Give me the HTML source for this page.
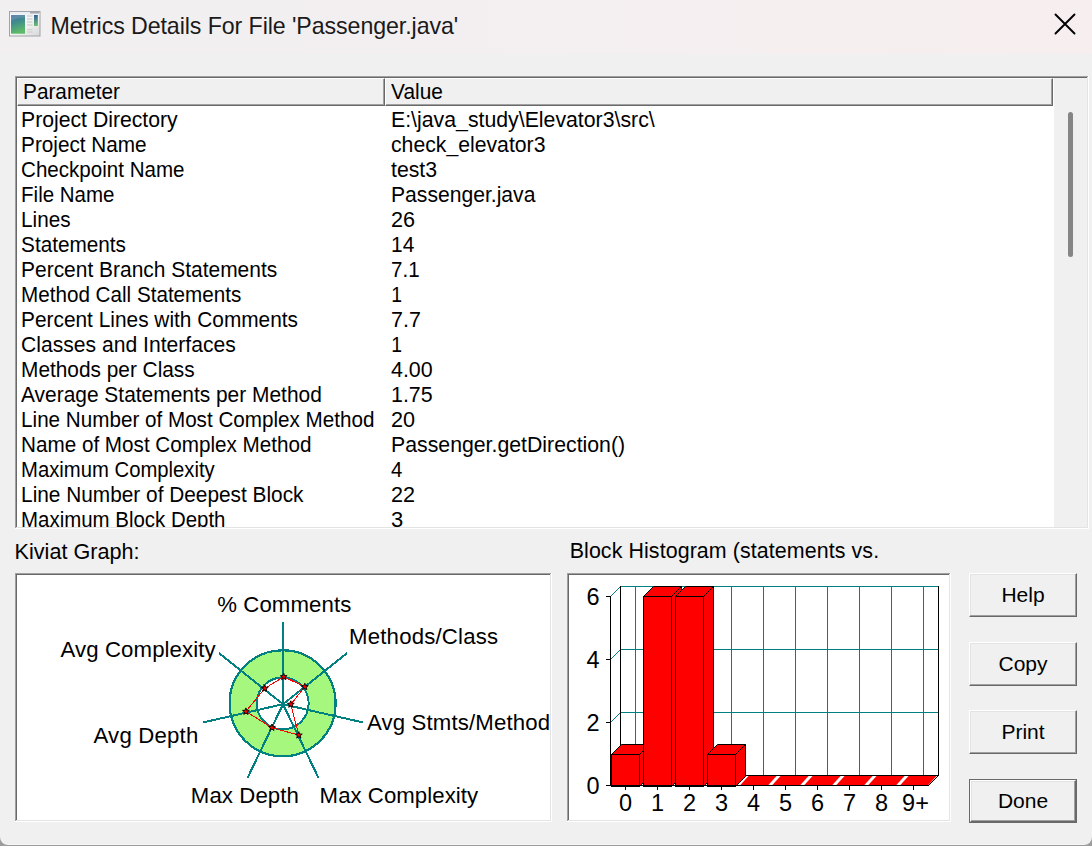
<!DOCTYPE html>
<html><head><meta charset="utf-8">
<style>
html,body{margin:0;padding:0;}
body{width:1092px;height:846px;overflow:hidden;background:#9c9c9c;position:relative;font-family:"Liberation Sans",sans-serif;color:#000;}
.a{position:absolute;white-space:nowrap;}
#title{left:0;top:0;width:1092px;height:54px;background:linear-gradient(90deg,#f1eff0 0%,#f3eff0 40%,#f6eeef 100%);}
#ttl{left:50.5px;top:8.6px;font-size:23.2px;line-height:34px;letter-spacing:-0.08px;color:#1a1a1a;}
.lb{font-size:21.5px;line-height:25px;}
.hcell{box-sizing:border-box;background:#f0f0f0;border-top:1px solid #fff;border-left:1px solid #fff;border-right:1px solid #696969;border-bottom:1px solid #696969;box-shadow:inset -1px -1px 0 #a0a0a0;}
.btn{box-sizing:border-box;width:108px;height:44px;background:#f0f0f0;border-top:1px solid #fff;border-left:1px solid #fff;border-right:1px solid #696969;border-bottom:1px solid #696969;box-shadow:inset -1px -1px 0 #a0a0a0, inset 1px 1px 0 #e3e3e3;font-size:21px;text-align:center;line-height:42px;}
</style></head><body>
<div class="a" style="left:0;top:0;width:1092px;height:845px;background:#f0f0f0;border-radius:0 0 8px 8px;"></div>
<div class="a" style="left:8px;top:844px;width:1076px;height:1px;background:#f6f6f6;"></div>
<div id="title" class="a"></div>
<svg class="a" style="left:9px;top:11px" width="32" height="26" viewBox="0 0 32 26">
  <defs>
    <linearGradient id="ig" x1="0" y1="0" x2="0.25" y2="1"><stop offset="0" stop-color="#4a70aa"/><stop offset="0.45" stop-color="#3f8d8c"/><stop offset="1" stop-color="#5dba69"/></linearGradient>
    <linearGradient id="ig2" x1="0" y1="0" x2="0" y2="1"><stop offset="0" stop-color="#2f5f9a"/><stop offset="1" stop-color="#6cc070"/></linearGradient>
    <linearGradient id="ibg" x1="0" y1="0" x2="1" y2="1"><stop offset="0" stop-color="#fdfdfd"/><stop offset="0.6" stop-color="#f2f2f2"/><stop offset="1" stop-color="#d6d6d6"/></linearGradient>
  </defs>
  <rect x="0.5" y="0.5" width="30.5" height="24.5" fill="url(#ibg)" stroke="#a0a4aa"/>
  <rect x="1" y="1" width="29.5" height="2.5" fill="#eaedf1"/>
  <rect x="21" y="1" width="9.5" height="1.5" fill="#a4a8ae"/>
  <rect x="2" y="4" width="14" height="18.7" fill="url(#ig)"/>
  <path d="M2 10 Q6 6.5 16 6.5 L16 4 L2 4 Z" fill="#ffffff" opacity="0.12"/>
  <g stroke="#d2d2d2" stroke-width="1.4"><line x1="18" y1="5" x2="23.5" y2="5"/><line x1="18" y1="8" x2="23.5" y2="8"/><line x1="18" y1="11" x2="23.5" y2="11"/><line x1="18" y1="14" x2="23.5" y2="14"/><line x1="18" y1="18.5" x2="23.5" y2="18.5"/><line x1="18" y1="21" x2="23.5" y2="21"/></g>
  <rect x="25" y="4" width="3.8" height="11" fill="url(#ig2)"/>
</svg>
<div id="ttl" class="a">Metrics Details For File 'Passenger.java'</div>
<svg class="a" style="left:1050px;top:9px" width="30" height="30" viewBox="0 0 30 30"><path d="M5.5 5.5 L24.5 24.5 M24.5 5.5 L5.5 24.5" stroke="#000" stroke-width="1.9" stroke-linecap="round"/></svg>
<div class="a" style="left:15px;top:76px;width:1074px;height:1px;background:#a0a0a0"></div>
<div class="a" style="left:15px;top:76px;width:1px;height:453px;background:#a0a0a0"></div>
<div class="a" style="left:16px;top:77px;width:1072px;height:1px;background:#696969"></div>
<div class="a" style="left:16px;top:77px;width:1px;height:451px;background:#696969"></div>
<div class="a" style="left:15px;top:528px;width:1074px;height:1px;background:#fff"></div>
<div class="a" style="left:1088px;top:76px;width:1px;height:453px;background:#fff"></div>
<div class="a" style="left:16px;top:527px;width:1072px;height:1px;background:#e3e3e3"></div>
<div class="a" style="left:1087px;top:77px;width:1px;height:451px;background:#e3e3e3"></div>
<div class="a" style="left:17px;top:78px;width:1070px;height:449px;background:#fff"></div>
<div class="a" style="left:17px;top:78px;width:1037px;height:449px;overflow:hidden">
<div class="a hcell" style="left:0;top:0;width:368px;height:28px;"></div>
<div class="a hcell" style="left:368px;top:0;width:668px;height:28px;"></div>
<div class="a lb" style="left:5.5px;top:2px;transform:scaleX(0.965);transform-origin:1.5px 0">Parameter</div>
<div class="a lb" style="left:373.5px;top:2px;transform:scaleX(0.97);transform-origin:1.5px 0">Value</div>
<div class="a lb" style="left:4px;top:30px;transform:scaleX(0.9859);transform-origin:1.5px 0">Project Directory</div><div class="a lb" style="left:374px;top:30px;transform:scaleX(0.9894);transform-origin:1.5px 0">E:\java_study\Elevator3\src\</div>
<div class="a lb" style="left:4px;top:55px;transform:scaleX(0.9644);transform-origin:1.5px 0">Project Name</div><div class="a lb" style="left:374px;top:55px;transform:scaleX(0.9864);transform-origin:1.5px 0">check_elevator3</div>
<div class="a lb" style="left:4px;top:80px;transform:scaleX(0.9564);transform-origin:1.5px 0">Checkpoint Name</div><div class="a lb" style="left:374px;top:80px;transform:scaleX(0.9886);transform-origin:1.5px 0">test3</div>
<div class="a lb" style="left:4px;top:105px;transform:scaleX(0.9534);transform-origin:1.5px 0">File Name</div><div class="a lb" style="left:374px;top:105px;transform:scaleX(0.9821);transform-origin:1.5px 0">Passenger.java</div>
<div class="a lb" style="left:4px;top:130px;transform:scaleX(0.9629);transform-origin:1.5px 0">Lines</div><div class="a lb" style="left:374px;top:130px;transform:scaleX(1.0048);transform-origin:1.5px 0">26</div>
<div class="a lb" style="left:4px;top:155px;transform:scaleX(0.9649);transform-origin:1.5px 0">Statements</div><div class="a lb" style="left:374px;top:155px;transform:scaleX(0.9714);transform-origin:1.5px 0">14</div>
<div class="a lb" style="left:4px;top:180px;transform:scaleX(0.9742);transform-origin:1.5px 0">Percent Branch Statements</div><div class="a lb" style="left:374px;top:180px;transform:scaleX(0.9556);transform-origin:1.5px 0">7.1</div>
<div class="a lb" style="left:4px;top:205px;transform:scaleX(0.9598);transform-origin:1.5px 0">Method Call Statements</div><div class="a lb" style="left:374px;top:205px;transform:scaleX(0.9000);transform-origin:1.5px 0">1</div>
<div class="a lb" style="left:4px;top:230px;transform:scaleX(0.9699);transform-origin:1.5px 0">Percent Lines with Comments</div><div class="a lb" style="left:374px;top:230px;transform:scaleX(1.0000);transform-origin:1.5px 0">7.7</div>
<div class="a lb" style="left:4px;top:255px;transform:scaleX(0.9819);transform-origin:1.5px 0">Classes and Interfaces</div><div class="a lb" style="left:374px;top:255px;transform:scaleX(0.9000);transform-origin:1.5px 0">1</div>
<div class="a lb" style="left:4px;top:280px;transform:scaleX(0.9688);transform-origin:1.5px 0">Methods per Class</div><div class="a lb" style="left:374px;top:280px;transform:scaleX(0.9949);transform-origin:1.5px 0">4.00</div>
<div class="a lb" style="left:4px;top:305px;transform:scaleX(0.9728);transform-origin:1.5px 0">Average Statements per Method</div><div class="a lb" style="left:374px;top:305px;transform:scaleX(0.9949);transform-origin:1.5px 0">1.75</div>
<div class="a lb" style="left:4px;top:330px;transform:scaleX(0.9602);transform-origin:1.5px 0">Line Number of Most Complex Method</div><div class="a lb" style="left:374px;top:330px;transform:scaleX(1.0048);transform-origin:1.5px 0">20</div>
<div class="a lb" style="left:4px;top:355px;transform:scaleX(0.9608);transform-origin:1.5px 0">Name of Most Complex Method</div><div class="a lb" style="left:374px;top:355px;transform:scaleX(0.9893);transform-origin:1.5px 0">Passenger.getDirection()</div>
<div class="a lb" style="left:4px;top:380px;transform:scaleX(0.9422);transform-origin:1.5px 0">Maximum Complexity</div><div class="a lb" style="left:374px;top:380px;transform:scaleX(0.9444);transform-origin:1.5px 0">4</div>
<div class="a lb" style="left:4px;top:405px;transform:scaleX(0.9685);transform-origin:1.5px 0">Line Number of Deepest Block</div><div class="a lb" style="left:374px;top:405px;transform:scaleX(1.0048);transform-origin:1.5px 0">22</div>
<div class="a lb" style="left:4px;top:430px;transform:scaleX(0.9504);transform-origin:1.5px 0">Maximum Block Depth</div><div class="a lb" style="left:374px;top:430px;transform:scaleX(1.0222);transform-origin:1.5px 0">3</div>
<div class="a lb" style="left:4px;top:455px;transform:scaleX(1.0000);transform-origin:1.5px 0">Average Block Depth</div><div class="a lb" style="left:374px;top:455px;transform:scaleX(1.0000);transform-origin:1.5px 0">1.50</div>
</div>
<div class="a" style="left:1054px;top:78px;width:33px;height:449px;background:#f0f0f0"></div>
<div class="a" style="left:1068px;top:112px;width:5px;height:145px;border-radius:2.5px;background:#858585"></div>
<div class="a" style="left:14.6px;top:539px;font-size:21.6px;">Kiviat Graph:</div>
<div class="a" style="left:569.7px;top:539px;font-size:21.4px;letter-spacing:0.09px">Block Histogram (statements vs.</div>
<div class="a" style="left:15px;top:573px;width:537px;height:1px;background:#a0a0a0"></div>
<div class="a" style="left:15px;top:573px;width:1px;height:249px;background:#a0a0a0"></div>
<div class="a" style="left:16px;top:574px;width:535px;height:1px;background:#696969"></div>
<div class="a" style="left:16px;top:574px;width:1px;height:247px;background:#696969"></div>
<div class="a" style="left:15px;top:821px;width:537px;height:1px;background:#fff"></div>
<div class="a" style="left:551px;top:573px;width:1px;height:249px;background:#fff"></div>
<div class="a" style="left:16px;top:820px;width:535px;height:1px;background:#e3e3e3"></div>
<div class="a" style="left:550px;top:574px;width:1px;height:247px;background:#e3e3e3"></div>
<div class="a" style="left:17px;top:575px;width:533px;height:245px;background:#fff"></div>
<div class="a" style="left:567px;top:573px;width:384px;height:1px;background:#a0a0a0"></div>
<div class="a" style="left:567px;top:573px;width:1px;height:249px;background:#a0a0a0"></div>
<div class="a" style="left:568px;top:574px;width:382px;height:1px;background:#696969"></div>
<div class="a" style="left:568px;top:574px;width:1px;height:247px;background:#696969"></div>
<div class="a" style="left:567px;top:821px;width:384px;height:1px;background:#fff"></div>
<div class="a" style="left:950px;top:573px;width:1px;height:249px;background:#fff"></div>
<div class="a" style="left:568px;top:820px;width:382px;height:1px;background:#e3e3e3"></div>
<div class="a" style="left:949px;top:574px;width:1px;height:247px;background:#e3e3e3"></div>
<div class="a" style="left:569px;top:575px;width:380px;height:245px;background:#fff"></div>
<svg class="a" style="left:0;top:0" width="1092" height="846" viewBox="0 0 1092 846">
<defs><clipPath id="kc"><rect x="17" y="575" width="533" height="245"/></clipPath><clipPath id="hc"><rect x="569" y="575" width="380" height="245"/></clipPath></defs>
<g clip-path="url(#kc)">
<g shape-rendering="crispEdges"><circle cx="282.6" cy="703.3000000000001" r="53" fill="#a6f77e" stroke="#008080" stroke-width="2.2"/>
<circle cx="282.7" cy="703.4000000000001" r="26" fill="#fff" stroke="#008080" stroke-width="2"/>
<line x1="283" y1="704.2" x2="283.00" y2="622.20" stroke="#008080" stroke-width="2"/>
<line x1="283" y1="704.2" x2="347.11" y2="653.07" stroke="#008080" stroke-width="2"/>
<line x1="283" y1="704.2" x2="362.94" y2="722.45" stroke="#008080" stroke-width="2"/>
<line x1="283" y1="704.2" x2="318.58" y2="778.08" stroke="#008080" stroke-width="2"/>
<line x1="283" y1="704.2" x2="247.42" y2="778.08" stroke="#008080" stroke-width="2"/>
<line x1="283" y1="704.2" x2="203.06" y2="722.45" stroke="#008080" stroke-width="2"/>
<line x1="283" y1="704.2" x2="218.89" y2="653.07" stroke="#008080" stroke-width="2"/>
</g>
<polygon points="283.7,676.8 304.8,686.8 290.8,704.4 298.8,735.2 271.9,727.6 245.9,711.5 264.8,688.4" fill="none" stroke="#ff0000" stroke-width="1" shape-rendering="crispEdges"/>
<polygon points="283.70,673.20 282.82,675.59 280.28,675.69 282.27,677.26 281.58,679.71 283.70,678.30 285.82,679.71 285.13,677.26 287.12,675.69 284.58,675.59" fill="#ff0000" stroke="#000" stroke-width="0.9"/>
<polygon points="304.80,683.20 303.92,685.59 301.38,685.69 303.37,687.26 302.68,689.71 304.80,688.30 306.92,689.71 306.23,687.26 308.22,685.69 305.68,685.59" fill="#ff0000" stroke="#000" stroke-width="0.9"/>
<polygon points="290.80,700.80 289.92,703.19 287.38,703.29 289.37,704.86 288.68,707.31 290.80,705.90 292.92,707.31 292.23,704.86 294.22,703.29 291.68,703.19" fill="#ff0000" stroke="#000" stroke-width="0.9"/>
<polygon points="298.80,731.60 297.92,733.99 295.38,734.09 297.37,735.66 296.68,738.11 298.80,736.70 300.92,738.11 300.23,735.66 302.22,734.09 299.68,733.99" fill="#ff0000" stroke="#000" stroke-width="0.9"/>
<polygon points="271.90,724.00 271.02,726.39 268.48,726.49 270.47,728.06 269.78,730.51 271.90,729.10 274.02,730.51 273.33,728.06 275.32,726.49 272.78,726.39" fill="#ff0000" stroke="#000" stroke-width="0.9"/>
<polygon points="245.90,707.90 245.02,710.29 242.48,710.39 244.47,711.96 243.78,714.41 245.90,713.00 248.02,714.41 247.33,711.96 249.32,710.39 246.78,710.29" fill="#ff0000" stroke="#000" stroke-width="0.9"/>
<polygon points="264.80,684.80 263.92,687.19 261.38,687.29 263.37,688.86 262.68,691.31 264.80,689.90 266.92,691.31 266.23,688.86 268.22,687.29 265.68,687.19" fill="#ff0000" stroke="#000" stroke-width="0.9"/>
<text x="217.2" y="612" font-family="Liberation Sans" font-size="22.2" letter-spacing="0.1">% Comments</text>
<text x="349" y="643.6" font-family="Liberation Sans" font-size="22.2" letter-spacing="0.2">Methods/Class</text>
<text x="60.6" y="657" font-family="Liberation Sans" font-size="22.2" letter-spacing="0.1">Avg Complexity</text>
<text x="367" y="730.2" font-family="Liberation Sans" font-size="22.2" letter-spacing="0.15">Avg Stmts/Method</text>
<text x="93.5" y="743" font-family="Liberation Sans" font-size="22.2" letter-spacing="0.2">Avg Depth</text>
<text x="190.8" y="802.6" font-family="Liberation Sans" font-size="22.2" letter-spacing="0.1">Max Depth</text>
<text x="319.6" y="802.6" font-family="Liberation Sans" font-size="22.2" letter-spacing="0.05">Max Complexity</text>
</g>
<g clip-path="url(#hc)">
<line x1="620" y1="586.5" x2="939" y2="586.5" stroke="#008080" stroke-width="1"/>
<line x1="620" y1="649.5" x2="939" y2="649.5" stroke="#008080" stroke-width="1"/>
<line x1="620" y1="712.5" x2="939" y2="712.5" stroke="#008080" stroke-width="1"/>
<line x1="635.5" y1="586" x2="635.5" y2="776" stroke="#008080" stroke-width="1"/>
<line x1="667.5" y1="586" x2="667.5" y2="776" stroke="#008080" stroke-width="1"/>
<line x1="699.5" y1="586" x2="699.5" y2="776" stroke="#008080" stroke-width="1"/>
<line x1="731.5" y1="586" x2="731.5" y2="776" stroke="#008080" stroke-width="1"/>
<line x1="763.5" y1="586" x2="763.5" y2="776" stroke="#008080" stroke-width="1"/>
<line x1="795.5" y1="586" x2="795.5" y2="776" stroke="#008080" stroke-width="1"/>
<line x1="827.5" y1="586" x2="827.5" y2="776" stroke="#008080" stroke-width="1"/>
<line x1="859.5" y1="586" x2="859.5" y2="776" stroke="#008080" stroke-width="1"/>
<line x1="891.5" y1="586" x2="891.5" y2="776" stroke="#008080" stroke-width="1"/>
<line x1="923.5" y1="586" x2="923.5" y2="776" stroke="#008080" stroke-width="1"/>
<line x1="610.5" y1="596.5" x2="620.5" y2="586.5" stroke="#008080" stroke-width="1"/>
<line x1="610.5" y1="659.5" x2="620.5" y2="649.5" stroke="#008080" stroke-width="1"/>
<line x1="610.5" y1="722.5" x2="620.5" y2="712.5" stroke="#008080" stroke-width="1"/>
<line x1="610.5" y1="785.5" x2="620.5" y2="775.5" stroke="#008080" stroke-width="1"/>
<line x1="620.5" y1="586" x2="620.5" y2="776" stroke="#000" stroke-width="1"/>
<line x1="938.5" y1="586" x2="938.5" y2="776" stroke="#000" stroke-width="1"/>
<line x1="610.5" y1="596" x2="610.5" y2="786" stroke="#000" stroke-width="1"/>
<line x1="606" y1="596.5" x2="611" y2="596.5" stroke="#000" stroke-width="1"/>
<line x1="606" y1="659.5" x2="611" y2="659.5" stroke="#000" stroke-width="1"/>
<line x1="606" y1="722.5" x2="611" y2="722.5" stroke="#000" stroke-width="1"/>
<line x1="606" y1="785.5" x2="611" y2="785.5" stroke="#000" stroke-width="1"/>
<line x1="625.5" y1="786" x2="625.5" y2="790" stroke="#000" stroke-width="1"/>
<line x1="657.5" y1="786" x2="657.5" y2="790" stroke="#000" stroke-width="1"/>
<line x1="689.5" y1="786" x2="689.5" y2="790" stroke="#000" stroke-width="1"/>
<line x1="721.5" y1="786" x2="721.5" y2="790" stroke="#000" stroke-width="1"/>
<line x1="753.5" y1="786" x2="753.5" y2="790" stroke="#000" stroke-width="1"/>
<line x1="785.5" y1="786" x2="785.5" y2="790" stroke="#000" stroke-width="1"/>
<line x1="817.5" y1="786" x2="817.5" y2="790" stroke="#000" stroke-width="1"/>
<line x1="849.5" y1="786" x2="849.5" y2="790" stroke="#000" stroke-width="1"/>
<line x1="881.5" y1="786" x2="881.5" y2="790" stroke="#000" stroke-width="1"/>
<line x1="913.5" y1="786" x2="913.5" y2="790" stroke="#000" stroke-width="1"/>
<polygon points="639.5,754.5 649.5,744.5 649.5,776.5 639.5,786.5" fill="#ff0000" stroke="#000" stroke-width="1"/>
<polygon points="611.5,754.5 639.5,754.5 649.5,744.5 621.5,744.5" fill="#ff0000" stroke="#000" stroke-width="1"/>
<rect x="611.5" y="754.5" width="28" height="32.0" fill="#ff0000" stroke="#000" stroke-width="1"/>
<polygon points="671.5,596.5 681.5,586.5 681.5,776.5 671.5,786.5" fill="#ff0000" stroke="#000" stroke-width="1"/>
<polygon points="643.5,596.5 671.5,596.5 681.5,586.5 653.5,586.5" fill="#ff0000" stroke="#000" stroke-width="1"/>
<rect x="643.5" y="596.5" width="28" height="190.0" fill="#ff0000" stroke="#000" stroke-width="1"/>
<polygon points="703.5,596.5 713.5,586.5 713.5,776.5 703.5,786.5" fill="#ff0000" stroke="#000" stroke-width="1"/>
<polygon points="675.5,596.5 703.5,596.5 713.5,586.5 685.5,586.5" fill="#ff0000" stroke="#000" stroke-width="1"/>
<rect x="675.5" y="596.5" width="28" height="190.0" fill="#ff0000" stroke="#000" stroke-width="1"/>
<polygon points="735.5,754.5 745.5,744.5 745.5,776.5 735.5,786.5" fill="#ff0000" stroke="#000" stroke-width="1"/>
<polygon points="707.5,754.5 735.5,754.5 745.5,744.5 717.5,744.5" fill="#ff0000" stroke="#000" stroke-width="1"/>
<rect x="707.5" y="754.5" width="28" height="32.0" fill="#ff0000" stroke="#000" stroke-width="1"/>
<polygon points="739.5,786 767.5,786 776.5,776 748.5,776" fill="#ff0000"/>
<polygon points="771.5,786 799.5,786 808.5,776 780.5,776" fill="#ff0000"/>
<polygon points="803.5,786 831.5,786 840.5,776 812.5,776" fill="#ff0000"/>
<polygon points="835.5,786 863.5,786 872.5,776 844.5,776" fill="#ff0000"/>
<polygon points="867.5,786 895.5,786 904.5,776 876.5,776" fill="#ff0000"/>
<polygon points="899.5,786 927.5,786 936.5,776 908.5,776" fill="#ff0000"/>
<line x1="610" y1="785.5" x2="929" y2="785.5" stroke="#000" stroke-width="1"/>
<line x1="745" y1="775.5" x2="939" y2="775.5" stroke="#000" stroke-width="1"/>
<line x1="928.5" y1="785.5" x2="938.5" y2="775.5" stroke="#000" stroke-width="1"/>
<text x="599.5" y="604.8" text-anchor="end" font-family="Liberation Sans" font-size="23.5">6</text>
<text x="599.5" y="667.8" text-anchor="end" font-family="Liberation Sans" font-size="23.5">4</text>
<text x="599.5" y="730.8" text-anchor="end" font-family="Liberation Sans" font-size="23.5">2</text>
<text x="599.5" y="793.8" text-anchor="end" font-family="Liberation Sans" font-size="23.5">0</text>
<text x="625.5" y="810.8" text-anchor="middle" font-family="Liberation Sans" font-size="23.5">0</text>
<text x="657.5" y="810.8" text-anchor="middle" font-family="Liberation Sans" font-size="23.5">1</text>
<text x="689.5" y="810.8" text-anchor="middle" font-family="Liberation Sans" font-size="23.5">2</text>
<text x="721.5" y="810.8" text-anchor="middle" font-family="Liberation Sans" font-size="23.5">3</text>
<text x="753.5" y="810.8" text-anchor="middle" font-family="Liberation Sans" font-size="23.5">4</text>
<text x="785.5" y="810.8" text-anchor="middle" font-family="Liberation Sans" font-size="23.5">5</text>
<text x="817.5" y="810.8" text-anchor="middle" font-family="Liberation Sans" font-size="23.5">6</text>
<text x="849.5" y="810.8" text-anchor="middle" font-family="Liberation Sans" font-size="23.5">7</text>
<text x="881.5" y="810.8" text-anchor="middle" font-family="Liberation Sans" font-size="23.5">8</text>
<text x="915.5" y="810.8" text-anchor="middle" font-family="Liberation Sans" font-size="23.5">9+</text>
</g></svg>
<div class="a btn" style="left:969px;top:573px;">Help</div>
<div class="a btn" style="left:969px;top:642px;">Copy</div>
<div class="a btn" style="left:969px;top:710px;">Print</div>
<div class="a" style="left:969px;top:779px;width:108px;height:44px;box-sizing:border-box;border:1px solid #696969;"><div class="a btn" style="left:0;top:0;width:106px;height:42px;line-height:40px;">Done</div></div>
</body></html>
